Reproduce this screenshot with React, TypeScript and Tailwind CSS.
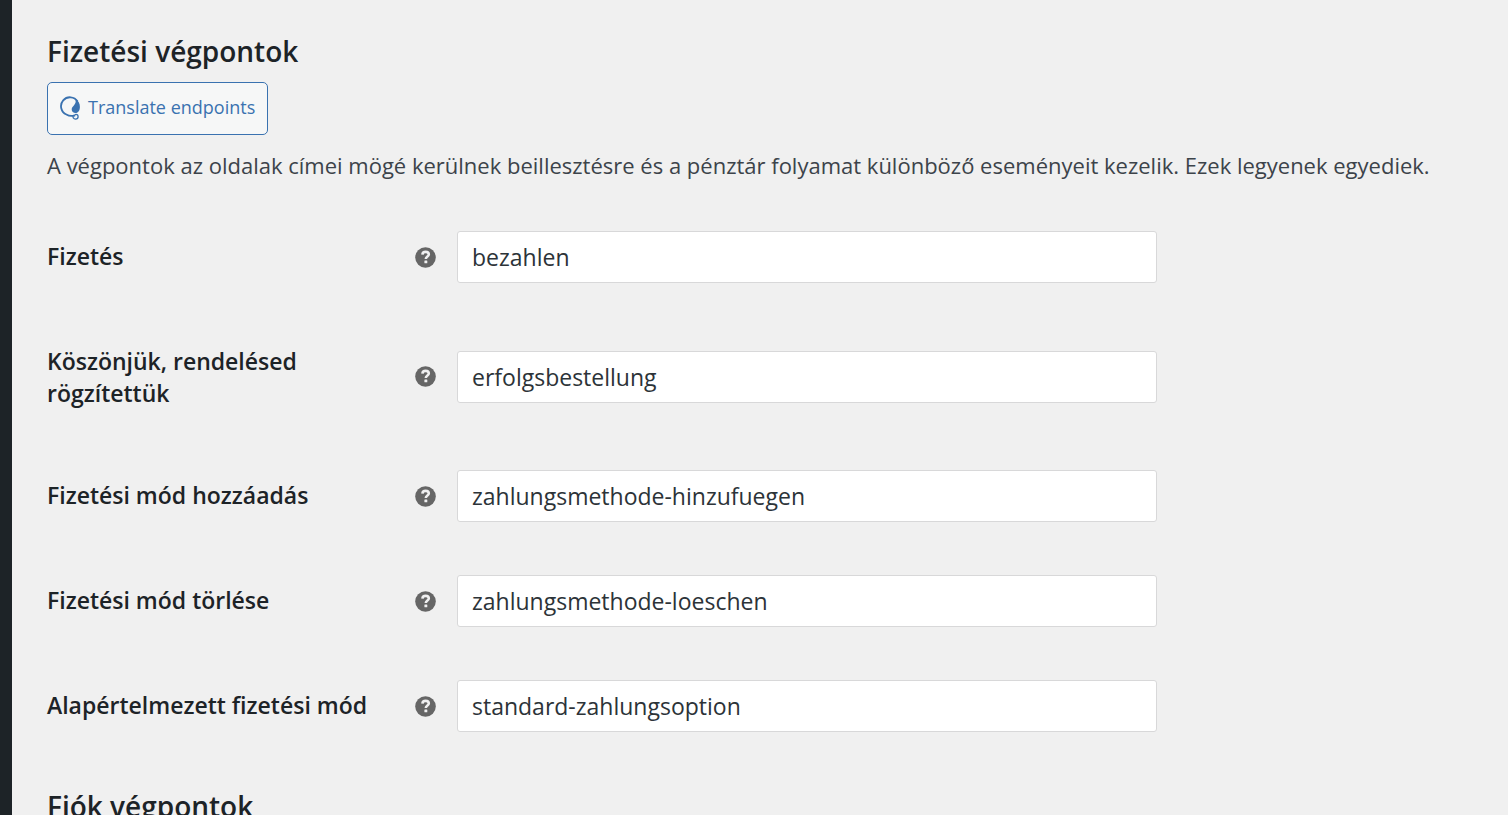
interface Endpoint {
  id: string;
  label: string;
  value: string;
}

const endpoints: Endpoint[] = [
  { id: "pay", label: "Fizetés", value: "bezahlen" },
  { id: "order-received", label: "Köszönjük, rendelésed rögzítettük", value: "erfolgsbestellung" },
  { id: "add-payment-method", label: "Fizetési mód hozzáadás", value: "zahlungsmethode-hinzufuegen" },
  { id: "delete-payment-method", label: "Fizetési mód törlése", value: "zahlungsmethode-loeschen" },
  { id: "default-payment-method", label: "Alapértelmezett fizetési mód", value: "standard-zahlungsoption" },
];

function TranslateIcon() {
  return (
    <svg viewBox="0 0 20 24" className="h-6 w-5 shrink-0" fill="none" aria-hidden="true">
      <path d="M14.500 19.300C12 20.200 9 20 6.400 18.500A9 9 0 1 1 17.600 5.400" stroke="#3a72b0" strokeWidth="1.800" />
      <path
        d="M15 2.600C18.400 4.600 20 7.600 19.900 11c-.1 3.600-1.700 6-4.300 6-2.200 0-3.900-1.500-3.900-3.600 0-3.600 6-4.800 3.300-10.800z"
        fill="#3a72b0"
      />
      <path d="M13.200 19.400c-.8 1.800.3 3.700 2.300 3.700 1.500 0 2.600-1 2.600-2.400s-.9-2.300-2.100-2.300c-.9 0-1.600.8-1.300 1.900" stroke="#3a72b0" strokeWidth="1.300" />
    </svg>
  );
}

function HelpTip() {
  return (
    <svg viewBox="0 0 21 21" className="size-[21px] shrink-0" role="img" aria-label="?">
      <circle cx="10.500" cy="10.500" r="10.300" fill="#666" />
      <path
        d="M7.400 7.600C7.500 5.700 8.800 4.900 10.600 4.900c1.900 0 3.200.9 3.200 2.500 0 2.100-3 2.100-3 4.700"
        fill="none"
        stroke="#f0f0f1"
        strokeWidth="2.600"
      />
      <rect x="9.400" y="13.500" width="2.900" height="2.800" rx=".5" fill="#f0f0f1" />
    </svg>
  );
}

function EndpointRow({ id, label, value }: Endpoint) {
  return (
    <div className="flex items-start">
      <label htmlFor={id} className="w-[368px] shrink-0 py-[35px] pr-10 text-[23px] leading-8 font-semibold text-[#1d2327]">
        {label}
      </label>
      <div className="flex min-w-0 flex-1 items-center gap-[21px] self-center pt-[26px] pb-[27px]">
        <HelpTip />
        <input
          id={id}
          type="text"
          defaultValue={value}
          className="h-[52px] w-full max-w-[700px] rounded-[3px] border border-[#d8d8d9] bg-white px-3.5 text-[23px] text-[#2c3338]"
        />
      </div>
    </div>
  );
}

export default function App() {
  return (
    <div className="flex h-screen overflow-hidden bg-[#f0f0f0] font-['Open_Sans','Noto_Sans',sans-serif]">
      <aside className="w-3 shrink-0 bg-[#1d2327]" />
      <main className="min-w-0 flex-1 px-[35px] pt-[31px]">
        <h2 className="text-[28px] leading-10 font-semibold text-[#1d2327]">Fizetési végpontok</h2>
        <button
          type="button"
          className="mt-[11px] flex h-[53px] items-center gap-2 rounded-[5px] border border-[#3a72b0] bg-[#f6f7f7] px-3 pb-0.5 text-[18px] text-[#3a72b0]"
        >
          <TranslateIcon />
          Translate endpoints
        </button>
        <p className="mt-3 text-[22px] leading-9 text-[#3c434a]">
          A végpontok az oldalak címei mögé kerülnek beillesztésre és a pénztár folyamat különböző eseményeit kezelik. Ezek
          legyenek egyediek.
        </p>
        <form className="mt-[22px]">
          {endpoints.map((endpoint) => (
            <EndpointRow key={endpoint.id} {...endpoint} />
          ))}
        </form>
        <h2 className="mt-[27px] text-[28px] leading-10 font-semibold text-[#1d2327]">Fiók végpontok</h2>
      </main>
    </div>
  );
}
